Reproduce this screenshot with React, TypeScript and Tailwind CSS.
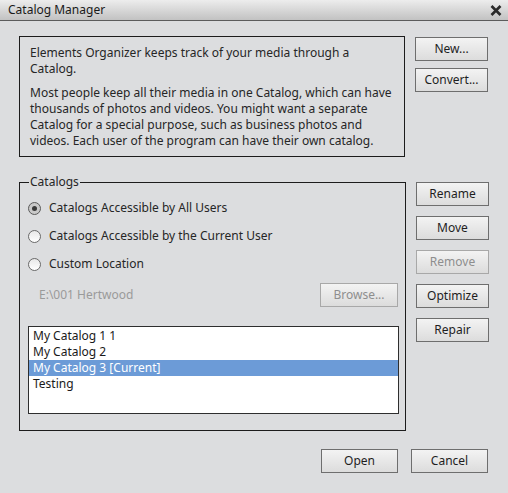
import type { ReactNode } from 'react';

const FONT = { fontFamily: '"Noto Sans", "DejaVu Sans", sans-serif' };

function Button({ children, disabled, className = '' }: { children: ReactNode; disabled?: boolean; className?: string }) {
  return (
    <button
      type="button"
      disabled={disabled}
      className={`h-[24px] border bg-gradient-to-b from-[#f3f3f3] to-[#dcdcdc] text-[12px] leading-none ${
        disabled ? 'border-[#a8a8a8] text-[#8e8e8e]' : 'border-[#6e6e6e] text-[#1e1e1e]'
      } ${className}`}
    >
      {children}
    </button>
  );
}

function Radio({ label, checked }: { label: string; checked?: boolean }) {
  return (
    <label className="flex items-center gap-[8px] h-[16px]">
      <span
        className={`w-[13px] h-[13px] rounded-full border flex items-center justify-center ${
          checked ? 'border-[#5a5a5a] bg-[#c9c9c9]' : 'border-[#6a6a6a] bg-gradient-to-b from-[#e8e8e8] to-white'
        }`}
      >
        {checked && <span className="w-[5px] h-[5px] rounded-full bg-[#3a3a3a]" />}
      </span>
      <span>{label}</span>
    </label>
  );
}

const CATALOGS = ['My Catalog 1 1', 'My Catalog 2', 'My Catalog 3 [Current]', 'Testing'];

export default function App() {
  return (
    <div className="w-[508px] h-[493px] bg-[#dcdddf] text-[12px] text-[#262626] flex flex-col" style={FONT}>
      {/* Title bar */}
      <div className="h-[21px] flex items-center justify-between pl-[8px] pr-[6px] bg-gradient-to-b from-[#ededed] to-[#c2c2c2] border-b border-[#5c5c5c]">
        <span className="text-[12px] text-[#1a1a1a]">Catalog Manager</span>
        <svg width="12" height="11" viewBox="0 0 12 11">
          <path d="M1.5 1 L10.5 10 M10.5 1 L1.5 10" stroke="#2a2a2a" strokeWidth="2.6" />
        </svg>
      </div>

      <div className="pl-[19px] pr-[20px] pt-[15px] flex flex-col">
        {/* Intro */}
        <div className="flex gap-[10px]">
          <div className="w-[387px] h-[121px] border border-[#1c1c1c] px-[10px] pt-[8px] leading-[16px]">
            <p>
              Elements Organizer keeps track of your media through a<br />
              Catalog.
            </p>
            <p className="mt-[8px]">
              Most people keep all their media in one Catalog, which can have<br />
              thousands of photos and videos. You might want a separate<br />
              Catalog for a special purpose, such as business photos and<br />
              videos. Each user of the program can have their own catalog.
            </p>
          </div>
          <div className="flex flex-col gap-[7px] pt-[1px]">
            <Button className="w-[73px]">New...</Button>
            <Button className="w-[73px]">Convert...</Button>
          </div>
        </div>

        {/* Catalogs group */}
        <div className="flex gap-[10px] mt-[17px]">
          <fieldset className="w-[387px] h-[257px] border border-[#1c1c1c] pl-[8px] pr-[6px]">
            <legend className="ml-[1px] px-[1px] leading-[16px]">Catalogs</legend>
            <div className="flex flex-col gap-[12px] pt-[10px]">
              <Radio label="Catalogs Accessible by All Users" checked />
              <Radio label="Catalogs Accessible by the Current User" />
              <Radio label="Custom Location" />
            </div>
            <div className="flex items-center justify-between mt-[11px] pl-[11px] pr-[1px] w-[371px]">
              <span className="text-[#9a9a9a]">E:\001 Hertwood</span>
              <Button disabled className="w-[78px]">Browse...</Button>
            </div>
            <div className="mt-[19px] h-[88px] w-[371px] border border-[#2e2e2e] bg-white leading-[16px]">
              {CATALOGS.map((name, i) => (
                <div
                  key={name}
                  className={`h-[16px] pl-[4px] ${i === 2 ? 'bg-[#6c9bd7] text-white' : 'text-[#1a1a1a]'} ${i === 0 ? 'mt-[1px]' : ''}`}
                >
                  {name}
                </div>
              ))}
            </div>
          </fieldset>
          <div className="flex flex-col gap-[10px] pt-[8px]">
            <Button className="w-[73px]">Rename</Button>
            <Button className="w-[73px]">Move</Button>
            <Button disabled className="w-[73px]">Remove</Button>
            <Button className="w-[73px]">Optimize</Button>
            <Button className="w-[73px]">Repair</Button>
          </div>
        </div>

        {/* Footer */}
        <div className="flex justify-end gap-[13px] mt-[18px]">
          <Button className="w-[77px]">Open</Button>
          <Button className="w-[77px]">Cancel</Button>
        </div>
      </div>
    </div>
  );
}
